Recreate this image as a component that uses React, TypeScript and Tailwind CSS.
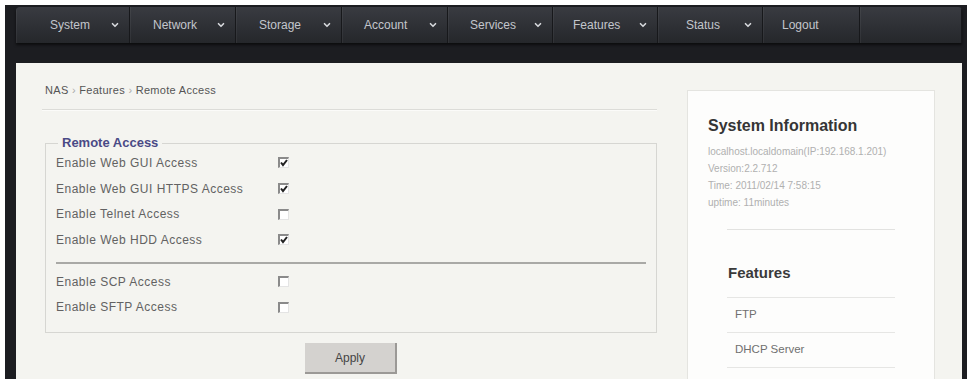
import { ChevronDown } from 'lucide-react'

const menu = [
  { label: 'System', w: 'w-[114px]', pl: 'pl-[34px]', drop: true },
  { label: 'Network', w: 'w-[106px]', pl: 'pl-[23px]', drop: true },
  { label: 'Storage', w: 'w-[106px]', pl: 'pl-[23px]', drop: true },
  { label: 'Account', w: 'w-[106px]', pl: 'pl-[22px]', drop: true },
  { label: 'Services', w: 'w-[105px]', pl: 'pl-[22px]', drop: true },
  { label: 'Features', w: 'w-[105px]', pl: 'pl-[20px]', drop: true },
  { label: 'Status', w: 'w-[105px]', pl: 'pl-[28px]', drop: true },
  { label: 'Logout', w: 'w-[97px]', pl: 'pl-[19px]', drop: false },
  { label: '', w: 'w-[102px]', pl: 'pl-[20px]', drop: false },
]

const accessRows = [
  { label: 'Enable Web GUI Access', on: true },
  { label: 'Enable Web GUI HTTPS Access', on: true },
  { label: 'Enable Telnet Access', on: false },
  { label: 'Enable Web HDD Access', on: true },
]

const secureRows = [
  { label: 'Enable SCP Access', on: false },
  { label: 'Enable SFTP Access', on: false },
]

function Check({ on }: { on: boolean }) {
  return (
    <span className="w-[11px] h-[11px] bg-white border-t-2 border-l-2 border-[#8a8a8a] border-r border-b border-r-[#e4e4e4] border-b-[#e4e4e4] flex items-center justify-center">
      {on && (
        <svg width="8" height="8" viewBox="0 0 8 8">
          <path d="M1 3.5 L3 6.2 L7 1" stroke="#222" strokeWidth="2" fill="none" />
        </svg>
      )}
    </span>
  )
}

function Row({ label, on }: { label: string; on: boolean }) {
  return (
    <div className="h-[25.7px] flex items-center pl-[10px]">
      <span className="w-[222px] text-[12px] text-[#626262] tracking-[0.5px]">{label}</span>
      <Check on={on} />
    </div>
  )
}

export default function App() {
  return (
    <div className="w-[970px] h-[379px] bg-white overflow-hidden flex flex-col font-['Liberation_Sans',Arial,sans-serif]">
      <div className="h-[5px] shrink-0 bg-white" />

      <div className="flex-1 min-h-0 overflow-hidden ml-[5px] mr-[3px] bg-[#1c1d21] pl-[11px] pr-[5px] pt-[2px] flex flex-col">
        <nav className="h-[36px] shrink-0 flex rounded-t-[4px] overflow-hidden bg-gradient-to-b from-[#393b41] to-[#25272b] shadow-[0_2px_3px_rgba(0,0,0,0.6)]">
          {menu.map((m, i) => (
            <div
              key={i}
              className={`${m.w} ${m.pl} pr-[9px] h-full flex items-center justify-between border-r border-[#17181b] shadow-[inset_1px_0_0_rgba(255,255,255,0.05)]`}
            >
              <span className="text-[12px] text-[#c3c6cc]">{m.label}</span>
              {m.drop && <ChevronDown className="w-[10px] h-[10px] text-[#d4d6da]" strokeWidth={4} />}
            </div>
          ))}
        </nav>

        <div className="mt-[20px] flex-1 min-h-0 bg-[#f4f4f0] flex">
          <main className="ml-[26px] w-[615px] pt-[21px]">
            <div className="pl-[3px] text-[11px] tracking-[0.3px] text-[#555] h-[12px] leading-[12px]">
              NAS <span className="text-[#aaa]">›</span> Features <span className="text-[#aaa]">›</span> Remote Access
            </div>
            <div className="mt-[13px] h-px bg-[#dcdcd8] shadow-[0_1px_0_#fbfbf9]" />

            <fieldset className="mt-[26px] ml-[3px] border border-[#d6d6d2] pb-[12px]">
              <legend className="ml-[12px] px-[4px] text-[13px] font-bold text-[#4a4a86] leading-[14px]">
                Remote Access
              </legend>
              {accessRows.map((r) => (
                <Row key={r.label} {...r} />
              ))}
              <div className="mx-[10px] mt-[9px] mb-[5px] h-[2px] bg-[#a9a9a6]" />
              {secureRows.map((r) => (
                <Row key={r.label} {...r} />
              ))}
            </fieldset>

            <div className="flex mt-[10px]">
              <button className="ml-[263px] w-[92px] h-[31px] bg-[#d4d2cf] border-r-2 border-b-2 border-[#9b9996] text-[12px] text-[#444]">
                Apply
              </button>
            </div>
          </main>

          <aside className="ml-[30px] mt-[27px] w-[248px] bg-[#fdfdfc] border border-[#e4e4e0] border-b-0 pt-[26px]">
            <h2 className="pl-[20px] text-[16px] font-bold text-[#353535] leading-[18px]">System Information</h2>
            <div className="pl-[20px] mt-[8px] text-[10px] text-[#b0b0b0] leading-[17px]">
              <div>localhost.localdomain(IP:192.168.1.201)</div>
              <div>Version:2.2.712</div>
              <div>Time: 2011/02/14 7:58:15</div>
              <div>uptime: 11minutes</div>
            </div>
            <div className="mx-[39px] mt-[18px] h-px bg-[#e2e2e0]" />
            <h3 className="pl-[40px] mt-[34px] text-[15px] font-bold text-[#3a3a3a] leading-[18px]">Features</h3>
            <div className="mx-[39px] mt-[15px] border-t border-[#e6e6e4]">
              {['FTP', 'DHCP Server'].map((f) => (
                <div key={f} className="h-[35px] pl-[8px] flex items-center border-b border-[#e6e6e4] text-[11.5px] text-[#707070]">
                  {f}
                </div>
              ))}
            </div>
          </aside>
        </div>
      </div>
    </div>
  )
}
